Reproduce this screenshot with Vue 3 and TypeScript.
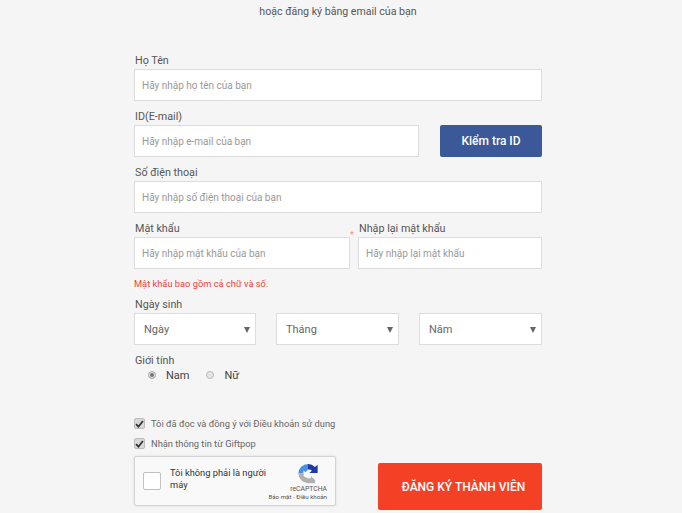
<script setup lang="ts">
const selects: string[] = ['Ngày', 'Tháng', 'Năm']
const checks: string[] = ['Tôi đã đọc và đồng ý với Điều khoản sử dụng', 'Nhận thông tin từ Giftpop']
</script>

<template>
  <main class="page">
    <h2 class="title">hoặc đăng ký bằng email của bạn</h2>
    <form class="form" @submit.prevent>
      <div class="field">
        <label class="label">Họ Tên</label>
        <input class="input" placeholder="Hãy nhập họ tên của bạn" />
      </div>
      <div class="field">
        <label class="label">ID(E-mail)</label>
        <div class="id-row">
          <input class="input" placeholder="Hãy nhập e-mail của bạn" />
          <button type="button" class="check-id">Kiểm tra ID</button>
        </div>
      </div>
      <div class="field">
        <label class="label">Số điện thoại</label>
        <input class="input" placeholder="Hãy nhập số điện thoại của bạn" />
      </div>
      <div class="pw-row">
        <div class="field">
          <label class="label">Mật khẩu</label>
          <input class="input" placeholder="Hãy nhập mật khẩu của bạn" />
        </div>
        <span class="star">*</span>
        <div class="field">
          <label class="label">Nhập lại mật khẩu</label>
          <input class="input" placeholder="Hãy nhập lại mật khẩu" />
        </div>
      </div>
      <p class="hint">Mật khẩu bao gồm cả chữ và số.</p>
      <div class="field birth">
        <label class="label">Ngày sinh</label>
        <div class="select-row">
          <div v-for="s in selects" :key="s" class="select">
            <span>{{ s }}</span>
            <svg width="6" height="7" viewBox="0 0 7 8"><path d="M0 1h7L3.5 8z" fill="#666" /></svg>
          </div>
        </div>
      </div>
      <div class="gender">
        <label class="label">Giới tính</label>
        <div class="radios">
          <span class="radio on"></span><span class="radio-text first">Nam</span>
          <span class="radio"></span><span class="radio-text">Nữ</span>
        </div>
      </div>
      <div class="checks">
        <div v-for="c in checks" :key="c" class="check">
          <span class="box">
            <svg width="10" height="10" viewBox="0 0 10 10"><path d="M1.2 5.2 3.8 8 8.8 1.600" fill="none" stroke="#333" stroke-width="2" /></svg>
          </span>
          <span>{{ c }}</span>
        </div>
      </div>
      <div class="bottom">
        <div class="captcha">
          <span class="cap-box"></span>
          <span class="cap-text">Tôi không phải là người máy</span>
          <div class="cap-logo">
            <svg width="22" height="21" viewBox="0 0 24 24">
              <path d="M1 12A11 11 0 0 1 12 1V7.500L9 10.500 7 8.500 6.500 12Z" fill="#4a90e2" />
              <path d="M12 1A11 11 0 0 1 20 4.500L23 2V11.500H13.500L16.500 8.500A6 6 0 0 0 12 7.500Z" fill="#1c3aa9" />
              <path d="M1 12H8L6.500 14A6.500 6.500 0 0 0 12 17.500H15L15.500 15 20 19.500V23H12A11 11 0 0 1 1 12Z" fill="#b0b0b0" />
            </svg>
            <span class="cap-brand">reCAPTCHA</span>
            <span class="cap-links">Bảo mật - Điều khoản</span>
          </div>
        </div>
        <button type="button" class="submit">ĐĂNG KÝ THÀNH VIÊN</button>
      </div>
    </form>
  </main>
</template>

<style>
html, body { background: #f5f5f5; }
</style>

<style scoped>
.page {
  box-sizing: border-box;
  width: 682px;
  height: 513px;
  overflow: hidden;
  background: #f5f5f5;
  font-family: Roboto, "Noto Sans", sans-serif;
  color: #555;
  padding-left: 134px;
}
.title {
  width: 408px;
  margin: 0;
  padding-top: 5px;
  height: 45px;
  box-sizing: border-box;
  font-size: 10.600px;
  line-height: 14px;
  font-weight: 400;
  text-align: center;
  color: #555;
}
.form { width: 408px; display: flex; flex-direction: column; }
.field { display: flex; flex-direction: column; flex: 1; min-width: 0; }
.label {
  display: block;
  height: 24px;
  box-sizing: border-box;
  padding: 8px 0 0 1px;
  font-size: 10.750px;
  line-height: 15px;
  color: #555;
}
.input {
  box-sizing: border-box;
  width: 100%;
  height: 32px;
  border: 1px solid #ddd;
  background: #fff;
  padding: 0 7px;
  font: 10px Roboto, sans-serif;
  color: #555;
  outline: none;
}
.input::placeholder { color: #999; opacity: 1; }
.id-row { display: flex; gap: 21px; }
.id-row .input { flex: 1; min-width: 0; }
.check-id {
  flex: none;
  width: 102px;
  height: 32px;
  border: 0;
  border-radius: 2px;
  background: #3b5998;
  color: #fff;
  font: 500 12px Roboto, sans-serif;
}
.pw-row { display: flex; position: relative; }
.pw-row .field:first-child { flex: none; width: 216px; }
.pw-row .field:last-child { flex: none; width: 184px; margin-left: 8px; }
.star {
  position: absolute;
  left: 216px;
  top: 17px;
  font-size: 9px;
  line-height: 10px;
  color: #f88;
}
.hint {
  margin: 0;
  height: 11px;
  padding-top: 9px;
  font-size: 9.300px;
  line-height: 11px;
  color: #f44336;
}
.birth { flex: none; }
.select-row { display: grid; grid-template-columns: 122px 123px 123px; gap: 20px; }
.select {
  box-sizing: border-box;
  height: 32px;
  border: 1px solid #ddd;
  background: #fff;
  padding: 0 5px 0 9px;
  display: flex;
  align-items: center;
  justify-content: space-between;
  font-size: 11px;
  color: #666;
}
.radios {
  display: flex;
  align-items: center;
  height: 12px;
  padding-left: 14px;
  font-size: 11px;
  color: #444;
}
.radio {
  box-sizing: border-box;
  width: 8px;
  height: 8px;
  border-radius: 50%;
  border: 1px solid #bbb;
  background: #e4e4e4;
}
.radio.on { background: #777; box-shadow: inset 0 0 0 1px #e4e4e4; }
.radio-text { margin-left: 10px; }
.radio-text.first { margin-right: 17px; }
.checks { margin-top: 36px; display: flex; flex-direction: column; gap: 7px; }
.check {
  display: flex;
  align-items: center;
  gap: 6px;
  height: 13px;
  font-size: 9.300px;
  color: #666;
}
.box {
  box-sizing: border-box;
  width: 11px;
  height: 11px;
  border-radius: 2px;
  background: #d8d8d8;
  border: 1px solid #bbb;
  display: flex;
  align-items: center;
  justify-content: center;
}
.bottom { display: flex; justify-content: space-between; align-items: flex-start; margin-top: 6px; }
.captcha {
  box-sizing: border-box;
  width: 202px;
  height: 50px;
  border: 1px solid #d3d3d3;
  border-radius: 2px;
  background: #f9f9f9;
  box-shadow: 0 0 3px rgba(0, 0, 0, .1);
  display: flex;
  align-items: center;
  position: relative;
  padding-left: 8px;
  color: #333;
}
.cap-box {
  flex: none;
  box-sizing: border-box;
  width: 18px;
  height: 18px;
  border: 1px solid #c1c1c1;
  background: #fff;
  border-radius: 2px;
}
.cap-text { width: 104px; margin-left: 9px; font-size: 9.300px; line-height: 12px; margin-top: -5px; }
.cap-logo {
  position: absolute;
  right: 8px;
  top: 6px;
  width: 64px;
  display: flex;
  flex-direction: column;
  align-items: flex-end;
  color: #555;
}
.cap-logo svg { margin-right: 8px; }
.cap-brand { font-size: 6.800px; line-height: 8px; margin-top: 1px; }
.cap-links { font-size: 6.200px; line-height: 8px; white-space: nowrap; }
.submit {
  width: 164px;
  height: 47px;
  margin-top: 7px;
  padding: 0 0 0 7px;
  border: 0;
  border-radius: 2px;
  background: #f44025;
  color: #fff;
  font: 500 12px Roboto, sans-serif;
}
</style>
